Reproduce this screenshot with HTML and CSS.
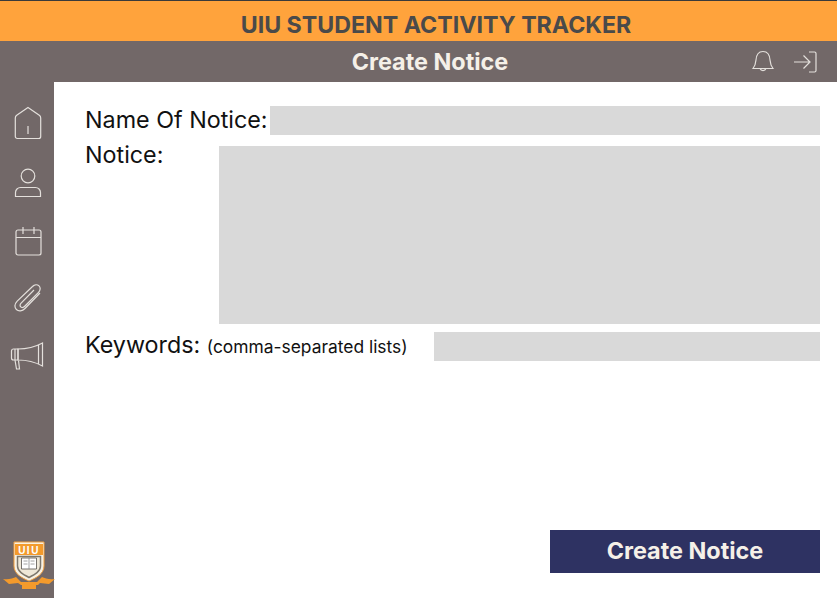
FILE: index.html
```html
<!DOCTYPE html>
<html lang="en">
<head>
  <meta charset="UTF-8">
  <title>Create Notice</title>
  <link rel="stylesheet" href="styles.css">
</head>
<body>
  <div class="app">
    <div class="brand-bar">UIU STUDENT ACTIVITY TRACKER</div>
    <div class="page-bar">
      <div class="page-title">Create Notice</div>
      <div class="page-actions">
        <svg class="bar-icon" width="24" height="26" viewBox="0 0 24 26">
          <path d="M2 19.500c2-2.500 2.600-4 2.900-8C5.200 6 7.500 2.500 12 2.500S18.800 6 19.100 11.500c.3 4 .9 5.500 2.900 8z"/>
          <path d="M9 19.500a3.200 3.200 0 0 0 6 0"/>
        </svg>
        <svg class="bar-icon" width="24" height="22" viewBox="0 0 24 22">
          <path d="M1 11h15M10.500 4.500 17 11l-6.500 6.500"/>
          <path d="M16 1h5.500a1.500 1.500 0 0 1 1.500 1.500v17a1.500 1.500 0 0 1-1.500 1.500H16"/>
        </svg>
      </div>
    </div>
    <div class="main">
      <div class="sidebar">
        <svg class="side-icon" width="28" height="34" viewBox="0 0 28 34">
          <path d="M14 1.500 25.300 9.300c.9.600 1.400 1.500 1.400 2.600v18.600a2 2 0 0 1-2 2H3.300a2 2 0 0 1-2-2V11.900c0-1.100.5-2 1.400-2.600z"/>
          <path d="M14 20v8"/>
        </svg>
        <svg class="side-icon" width="28" height="30" viewBox="0 0 28 30">
          <circle cx="14" cy="8" r="6.800"/>
          <path d="M1.500 28.500v-4a5 5 0 0 1 5-5h15a5 5 0 0 1 5 5v4z"/>
        </svg>
        <svg class="side-icon" width="28" height="30" viewBox="0 0 28 30">
          <rect x="2" y="4" width="25" height="25" rx="2"/>
          <path d="M2 11.500h25M9 1v7M20 1v7"/>
        </svg>
        <svg class="side-icon" width="30" height="30" viewBox="0 0 30 30">
          <path d="M27 9 12 24.500c-2.800 2.800-6.500 3-8.600 1s-2-5.500.8-8.400L19.500 2.500c2-2 4.800-2.200 6.500-.6s1.500 4.400-.5 6.400L11.500 22.500c-1.200 1.200-2.800 1.400-3.800.4s-.8-2.600.4-3.800L21 6"/>
        </svg>
        <svg class="side-icon side-icon-horn" width="34" height="28" viewBox="0 0 34 28">
          <path d="M8 7C18 7 26 4.500 32.500 1v23C26 20.500 18 18 8 18z"/>
          <path d="M28.500 3v19"/>
          <path d="M8 7H3.500a2 2 0 0 0-2 2v7a2 2 0 0 0 2 2H8z"/>
          <path d="M5 7v11M5 18l1.500 9h3l-1-8.500"/>
        </svg>
        <svg class="crest" width="54" height="50" viewBox="0 0 54 50">
          <path d="M12 1h30v24c0 8-8 12-15 15-7-3-15-7-15-15z" fill="#f7f1e3" stroke="#f2a040"/>
          <path d="M13 3h28v11H13z" fill="#f39a2c"/>
          <text class="crest-text" x="27" y="12.500">UIU</text>
          <path d="M15.500 15.500h23v9.500c0 5.500-5.500 8.500-11.500 11.500-6-3-11.500-6-11.500-11.500z" fill="#efe8d8" stroke="#7d776c" stroke-width="1.500"/>
          <path d="M19.500 17h15v11h-15z" fill="#fff" stroke="#55524c" stroke-width=".8"/>
          <path d="M27 17v11M21.500 20h4M21.500 23h4M28.500 20h4M28.500 23h4" stroke="#8a8a8a" stroke-width=".8"/>
          <path d="M1 38c6 1 10-1 13-2l5 5h16l5-5c3 1 7 3 13 2l-6 5-9-1-2 2H19l-3-2-9 1z" fill="#f39a2c"/>
          <path d="M20 43h14v5H20z" fill="#f39a2c"/>
        </svg>
      </div>
      <div class="content">
        <div class="field field-name">
          <label class="field-label">Name Of Notice:</label>
          <div class="field-box"></div>
        </div>
        <div class="field field-notice">
          <label class="field-label">Notice:</label>
          <div class="field-box"></div>
        </div>
        <div class="field field-keywords">
          <label class="field-label">Keywords: <small>(comma-separated lists)</small></label>
          <div class="field-box"></div>
        </div>
        <button class="submit-btn">Create Notice</button>
      </div>
    </div>
  </div>
</body>
</html>
```

FILE: styles.css
```css
* {
  box-sizing: border-box;
}
html, body {
  margin: 0;
  height: 100%;
  overflow: hidden;
}
body {
  font-family: Inter, "Liberation Sans", sans-serif;
  background: #fff;
}
.app {
  display: flex;
  flex-direction: column;
  height: 598px;
}
.brand-bar {
  height: 41px;
  background: #ffa33c;
  border-top: 1px solid #3a3a3a;
  color: #4a4a4a;
  font-size: 23.200px;
  font-weight: 700;
  line-height: 48px;
  text-align: center;
  padding-left: 35px;
}
.page-bar {
  height: 41px;
  background: #726868;
  display: flex;
  align-items: center;
  justify-content: center;
  position: relative;
}
.page-title {
  color: #f5f0e8;
  font-size: 23.400px;
  font-weight: 700;
  padding-left: 23px;
}
.page-actions {
  position: absolute;
  top: 8px;
  left: 751px;
  display: flex;
  align-items: center;
  gap: 18px;
}
.bar-icon, .side-icon {
  fill: none;
  stroke: #e4e0dc;
  stroke-width: 1.200;
  display: block;
}
.side-icon-horn {
  margin-left: -3px;
}
.main {
  flex: 1;
  display: flex;
  min-height: 0;
}
.sidebar {
  width: 54px;
  background: #726868;
  display: flex;
  flex-direction: column;
  align-items: center;
  gap: 28px;
  padding-top: 24px;
  padding-left: 2px;
  position: relative;
}
.crest {
  position: absolute;
  left: 2px;
  bottom: 7px;
}
.crest-text {
  fill: #fff;
  font-family: "Liberation Sans", sans-serif;
  font-size: 10px;
  font-weight: 700;
  letter-spacing: 1.500px;
  text-anchor: middle;
}
.content {
  flex: 1;
  display: flex;
  flex-direction: column;
  padding: 24px 17px 25px 31px;
}
.field {
  display: flex;
}
.field-label {
  flex: none;
  color: #111;
  font-size: 23.300px;
  line-height: 29px;
  white-space: nowrap;
}
.field-label small {
  font-size: 17.400px;
}
.field-box {
  flex: 1;
  background: #d9d9d9;
}
.field-name {
  height: 29px;
}
.field-name .field-label {
  width: 185px;
  margin-top: -1px;
}
.field-notice {
  height: 178px;
  margin-top: 11px;
}
.field-notice .field-label {
  width: 134px;
  margin-top: -6px;
}
.field-keywords {
  height: 29px;
  margin-top: 8px;
}
.field-keywords .field-label {
  width: 349px;
  margin-top: -2px;
}
.submit-btn {
  align-self: flex-end;
  margin-top: auto;
  width: 270px;
  height: 43px;
  padding: 0 0 2px;
  background: #2e3262;
  color: #f5f0e8;
  border: none;
  font-family: inherit;
  font-size: 23.400px;
  font-weight: 700;
}
```
